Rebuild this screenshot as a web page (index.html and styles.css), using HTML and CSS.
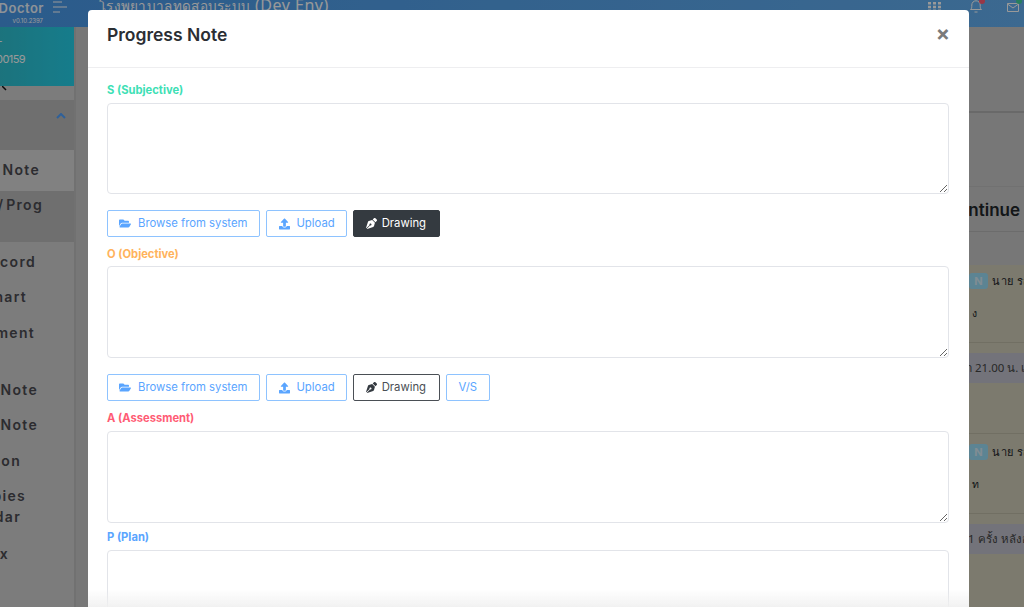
FILE: index.html
```html
<!DOCTYPE html>
<html lang="en">
<head>
<meta charset="utf-8">
<title>Progress Note</title>
<link rel="stylesheet" href="styles.css">
</head>
<body>
<div class="page">
  <header class="topbar">
    <div class="brand">
      <div class="brand-name">Doctor</div>
      <div class="brand-ver">v0.10.2397</div>
    </div>
    <svg class="burger" viewBox="0 0 14 12"><path d="M0 1h9M0 6h14M0 11h7" stroke="#fff" stroke-width="1.2" fill="none"/></svg>
    <div class="hospital"><span class="hospital-th">โรงพยาบาลทดสอบระบบ</span> (Dev Env)</div>
    <div class="top-icons">
      <svg class="ti-grid" viewBox="0 0 13 10"><path fill="#fff" d="M0 0h3v2.500H0zM5 0h3v2.500H5zM10 0h3v2.500h-3zM0 3.700h3v2.500H0zM5 3.700h3v2.500H5zM10 3.700h3v2.500h-3zM0 7.400h3v2.500H0zM5 7.400h3v2.500H5zM10 7.400h3v2.500h-3z"/></svg>
      <div class="ti-wrap ti-wrap-bell">
        <svg class="ti-bell" viewBox="0 0 12 13"><path d="M.5 9.500c1.300-1 1.300-2 1.300-4.500a4.200 4.200 0 0 1 8.400 0c0 2.500 0 3.500 1.300 4.500zM4.500 12h3" stroke="#fff" fill="none"/></svg>
        <span class="dot dot-red"></span>
      </div>
      <div class="ti-wrap">
        <svg class="ti-mail" viewBox="0 0 12 9"><path d="M.5.500h11v8H.5zM.5 1l5.500 4 5.500-4" stroke="#fff" fill="none"/></svg>
        <span class="dot dot-green"></span>
      </div>
    </div>
  </header>
  <div class="content">
    <aside class="sidebar">
      <div class="patient">
        <span class="patient-name">นาย ทดสอบ -</span>
        <span class="patient-hn">HN 6400159</span>
      </div>
      <div class="side-gap"><svg class="tick" viewBox="0 0 5 5"><path d="M0 0l4 4" stroke="#111" stroke-width="1.500"/></svg></div>
      <div class="side-group">
        <svg class="chev" viewBox="0 0 10 6"><path d="M1 5l4-4 4 4" stroke="#4fa0ff" stroke-width="2" fill="none"/></svg>
      </div>
      <div class="side-item s1 light">Progress Note</div>
      <div class="side-item s2 dark">Doctor / Prog</div>
      <div class="side-item s3">Nurse Record</div>
      <div class="side-item s4">Vital Chart</div>
      <div class="side-item s5">Assessment</div>
      <div class="side-item s6">Consult Note</div>
      <div class="side-item s7">Nurse Note</div>
      <div class="side-item s8">Medication</div>
      <div class="side-item s9">Therapies</div>
      <div class="side-item s10">Calendar</div>
      <div class="side-item s11">Rx</div>
    </aside>
    <main class="main">
      <div class="band b1"></div>
      <div class="band b2"></div>
      <div class="band b3"><span class="continue">Continue</span></div>
      <div class="band b4"></div>
      <div class="orders">
        <div class="order">
          <div class="order-head"><span class="badge">N</span><span class="th">นาย รถ</span></div>
          <div class="order-sub">ง</div>
        </div>
        <div class="chip c1">เวลา 21.00 น. เวลา</div>
        <div class="order">
          <div class="order-head"><span class="badge">N</span><span class="th">นาย รถ</span></div>
          <div class="order-sub">ท</div>
        </div>
        <div class="chip c2">วัน 1 ครั้ง หลังอาหาร</div>
      </div>
    </main>
  </div>
</div>

<div class="overlay">
  <section class="modal">
    <header class="modal-head">
      <h2 class="modal-title">Progress Note</h2>
      <span class="close">×</span>
    </header>
    <div class="modal-body">
      <label class="label c-s">S (Subjective)</label>
      <textarea class="area area-s"></textarea>
      <div class="btns">
        <button class="btn"><svg class="ic" viewBox="0 0 576 512"><use href="#i-folder"/></svg>Browse from system</button>
        <button class="btn btn-up"><svg class="ic ic-up" viewBox="0 0 512 512"><use href="#i-upload"/></svg>Upload</button>
        <button class="btn btn-draw active"><svg class="ic ic-pen" viewBox="0 0 512 512"><use href="#i-pen"/></svg>Drawing</button>
      </div>
      <label class="label c-o">O (Objective)</label>
      <textarea class="area"></textarea>
      <div class="btns">
        <button class="btn"><svg class="ic" viewBox="0 0 576 512"><use href="#i-folder"/></svg>Browse from system</button>
        <button class="btn btn-up"><svg class="ic ic-up" viewBox="0 0 512 512"><use href="#i-upload"/></svg>Upload</button>
        <button class="btn btn-draw"><svg class="ic ic-pen" viewBox="0 0 512 512"><use href="#i-pen"/></svg>Drawing</button>
        <button class="btn btn-vs">V/S</button>
      </div>
      <label class="label c-a">A (Assessment)</label>
      <textarea class="area"></textarea>
      <label class="label c-p">P (Plan)</label>
      <textarea class="area"></textarea>
    </div>
  </section>
  <div class="fade"></div>
</div>

<svg class="defs" width="0" height="0">
  <defs>
    <path id="i-folder" fill="currentColor" d="M572.694 292.093L500.27 416.248A63.997 63.997 0 0 1 444.989 448H45.025c-18.523 0-30.064-20.093-20.731-36.093l72.424-124.155A64 64 0 0 1 152 256h399.964c18.523 0 30.064 20.093 20.73 36.093zM152 224h328v-48c0-26.51-21.49-48-48-48H272l-64-64H48C21.49 64 0 85.49 0 112v278.046l69.077-118.418C86.214 242.25 117.989 224 152 224z"/>
    <path id="i-upload" fill="currentColor" d="M296 384h-80c-13.3 0-24-10.7-24-24V192h-87.7c-17.8 0-26.7-21.5-14.1-34.1L242.3 5.7c7.5-7.5 19.8-7.5 27.3 0l152.2 152.2c12.6 12.6 3.7 34.1-14.1 34.1H320v168c0 13.3-10.7 24-24 24zm216-8v112c0 13.3-10.7 24-24 24H24c-13.3 0-24-10.7-24-24V376c0-13.3 10.7-24 24-24h136v8c0 30.9 25.1 56 56 56h80c30.9 0 56-25.1 56-56v-8h136c13.3 0 24 10.7 24 24z"/>
    <path id="i-pen" fill="currentColor" d="M136.6 138.79a64.003 64.003 0 0 0-43.31 41.35L0 460l14.69 14.69L164.8 324.58c-2.99-6.26-4.8-13.18-4.8-20.58 0-26.51 21.49-48 48-48s48 21.49 48 48-21.49 48-48 48c-7.4 0-14.32-1.81-20.58-4.8L37.31 497.31 52 512l279.86-93.29a64.003 64.003 0 0 0 41.35-43.31L416 224 288 96l-151.4 42.79zm361.34-64.62l-60.11-60.11c-18.75-18.75-49.16-18.75-67.91 0l-56.55 56.55 128.02 128.02 56.55-56.55c18.75-18.75 18.75-49.15 0-67.91z"/>
  </defs>
</svg>
</body>
</html>
```
FILE: styles.css
```css
* { box-sizing: border-box; }
html, body { margin: 0; height: 100%; overflow: hidden; }
body { font-family: Inter, "Noto Sans", sans-serif; color: #212529; background: #c6c6c6; }
.defs { position: absolute; }

.page { width: 1024px; height: 607px; overflow: hidden; display: flex; flex-direction: column; }

/* top bar */
.topbar { height: 27px; flex: none; display: flex; background: linear-gradient(90deg, #4898e8, #64aff0); color: #fff; }
.brand { width: 53px; flex: none; display: flex; flex-direction: column; align-items: flex-end; padding-right: 9px; }
.brand-name { font-size: 13px; font-weight: 600; line-height: 16px; height: 16px; letter-spacing: .5px; opacity: .9; }
.brand-ver { font-size: 6px; line-height: 8px; margin-right: 1px; margin-top: 1px; }
.burger { width: 14px; height: 12px; margin-top: 1px; flex: none; }
.hospital { font-size: 16px; line-height: 16px; margin-left: 32px; white-space: nowrap; letter-spacing: .5px; font-family: "Noto Sans", sans-serif; margin-top: -3px; flex: none; }
.hospital-th { font-size: 13.500px; letter-spacing: .3px; }
.top-icons { margin-left: auto; display: flex; gap: 25px; padding-right: 5px; align-items: flex-start; }
.ti-grid { width: 13px; height: 10px; margin-top: 2px; margin-right: 4px; }
.ti-wrap { position: relative; height: 13px; }
.ti-bell { width: 12px; height: 13px; display: block; }
.ti-mail { width: 12px; height: 9px; display: block; margin-top: 3px; }
.dot { position: absolute; width: 6px; height: 6px; border-radius: 50%; top: -2px; right: -3px; }
.dot-red { background: #ff5c75; }
.dot-green { background: #42d29d; }

/* page behind */
.content { flex: 1; display: flex; min-height: 0; background: #c6c6c6; }
.sidebar { width: 74px; flex: none; background: #cfcfcf; display: flex; flex-direction: column; font-size: 14px; font-weight: 600; letter-spacing: 1.300px; color: #4a4a50; }
.patient { height: 59px; background: linear-gradient(90deg, #2fc0d0, #25d0e9); color: #fff; display: flex; flex-direction: column; align-items: flex-end; padding: 6px 49px 0 0; font-size: 11px; font-weight: 400; line-height: 16px; white-space: nowrap; letter-spacing: -.6px; flex: none; }
.patient-name { margin-right: 23px; margin-bottom: 2px; }
.side-gap { height: 14px; flex: none; background: #cfcfcf; padding: 0 0 0 2px; }
.tick { width: 5px; height: 5px; display: block; }
.side-group { height: 50px; flex: none; background: #b9b9b9; display: flex; justify-content: flex-end; align-items: flex-start; padding: 13px 8px 0 0; }
.chev { width: 10px; height: 6px; }
.side-item { display: flex; justify-content: flex-end; white-space: nowrap; line-height: 18px; flex: none; }
.light { background: #d8d8d8; }
.dark { background: #b9b9b9; }
.s1 { height: 41px; padding: 11px 34px 0 0; }
.s2 { height: 51px; padding: 5px 31px 0 0; word-spacing: -3px; }
.s3 { height: 46px; padding: 11px 38px 0 0; }
.s4 { height: 36px; padding: 0 47px 0 0; }
.s5 { height: 57px; padding: 0 39px 0 0; }
.s6 { height: 35px; padding: 0 36px 0 0; }
.s7 { height: 36px; padding: 0 36px 0 0; }
.s8 { height: 35px; padding: 0 53px 0 0; }
.s9 { height: 21px; padding: 0 48px 0 0; }
.s10 { height: 37px; padding: 0 53px 0 0; }
.s11 { height: 20px; padding: 0 65px 0 0; }

.main { flex: 1; min-width: 0; display: flex; flex-direction: column; overflow: hidden; padding-left: 20px; border-left: 2px solid #bdbdbd; }
.band { flex: none; background: #c6c6c6; }
.b1 { height: 86px; border-bottom: 2px solid #b0b0b0; }
.b2 { height: 74px; border-bottom: 1px solid #bcbcbc; }
.b3 { height: 45px; display: flex; justify-content: flex-end; padding: 13px 4px 0 0; font-size: 17px; font-weight: 600; line-height: 20px; white-space: nowrap; border-bottom: 1px solid #b4b4b4; }
.b4 { height: 33px; }
.orders { flex: 1; background: #cfcbb7; font-family: "Noto Sans", sans-serif; white-space: nowrap; }
.order { height: 78px; padding: 7px 0 0 873px; border-bottom: 1px solid #bdb9a6; }
.chip ~ .order { height: 81px; padding-top: 9px; border-top: 1px solid #bdb9a6; }
.order-head { display: flex; align-items: center; gap: 4px; width: 100px; }
.badge { width: 19px; height: 16px; flex: none; border-radius: 3px; background: #9adcf5; color: #d8ecf5; font-size: 11px; font-weight: 700; display: flex; align-items: center; justify-content: center; font-family: Inter, sans-serif; }
.th { font-size: 11px; letter-spacing: .5px; flex: none; }
.order-sub { margin-top: 15px; font-size: 10.500px; line-height: 16px; padding-left: 3px; }
.chip { height: 30px; margin-top: 10px; background: #c0c0cb; padding: 6px 0 0 853px; font-size: 11.500px; line-height: 18px; color: #444; }
.c1 { margin-bottom: 50px; }
.c2 { padding-left: 855px; }

/* modal */
.overlay { position: fixed; inset: 0; background: rgba(0, 0, 0, .4); }
.modal { position: absolute; left: 88px; top: 10px; width: 881px; height: 640px; background: #fff; border-radius: 4px 4px 0 0; }
.modal-head { height: 58px; border-bottom: 1px solid #eeeef0; display: flex; align-items: flex-start; justify-content: space-between; padding: 14px 19px 0; }
.modal-title { margin: 0; font-size: 17.500px; font-weight: 600; line-height: 22px; color: #2b2e33; }
.close { font-size: 21px; font-weight: 700; line-height: 20px; color: #7a7a7a; }
.modal-body { padding: 14px 20px 0 19px; display: flex; flex-direction: column; }
.label { font-size: 11.200px; font-weight: 700; line-height: 16px; height: 16px; margin-bottom: 5px; }
.c-s { color: #3ee0b5; }
.c-o { color: #ffb35c; margin-bottom: 4px; }
.c-a { color: #ff5c75; }
.c-p { color: #5aa5ff; margin-top: 6px; }
.area { display: block; width: 100%; height: 92px; flex: none; border: 1px solid #e2e4e9; border-radius: 4px; background: #fff; resize: vertical; outline: none; padding: 0; margin: 0; }
.area-s { height: 91px; }
.btns { display: flex; gap: 6px; margin-top: 16px; margin-bottom: 9px; }
.btn { height: 27px; border: 1px solid #8ec3ff; background: #fff; color: #5aa5ff; border-radius: 2px; font: 400 11.300px/1 Inter, sans-serif; padding: 0 12px 0 11px; display: flex; align-items: center; gap: 7px; white-space: nowrap; }
.btn-up { gap: 6px; padding: 0 11px 0 12px; }
.ic { width: 12px; height: 11px; flex: none; }
.ic-up { width: 11px; height: 12px; }
.ic-pen { width: 11px; height: 11px; color: #343a40; }
.btn-draw { border-color: #4a4f55; color: #4a4f55; gap: 5px; padding: 0 13px 0 12px; }
.btn-draw.active { background: #343a40; border-color: #343a40; color: #fff; }
.btn-draw.active .ic-pen { color: #fff; }
.btn-vs { padding: 0 11.500px; }

.fade { position: fixed; left: 88px; width: 881px; bottom: 0; height: 18px; background: linear-gradient(180deg, rgba(240,240,240,0), rgba(240,240,240,.9)); pointer-events: none; }
```
